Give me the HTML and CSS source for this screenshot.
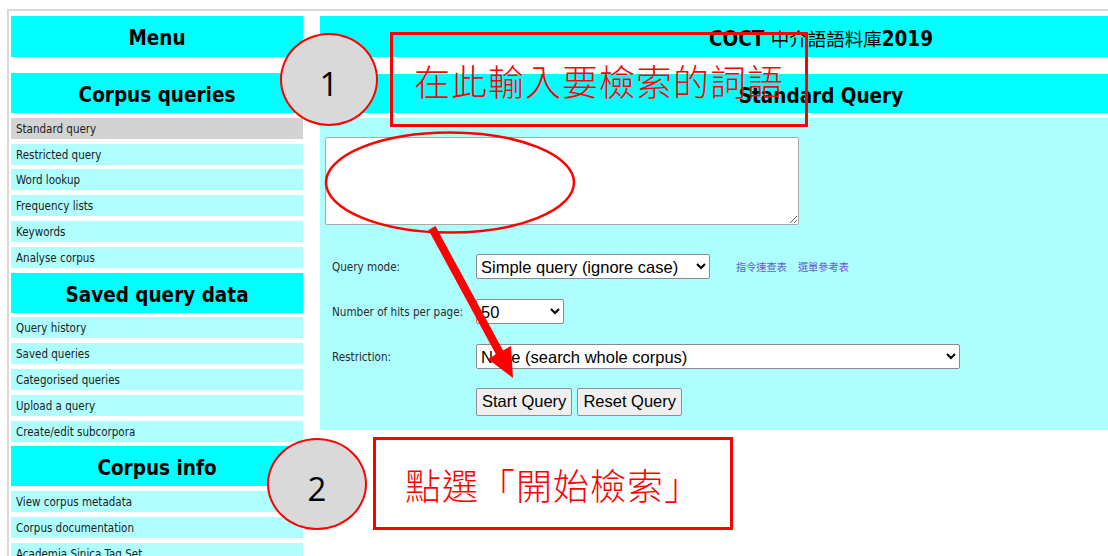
FILE: index.html
```html
<!DOCTYPE html>
<html lang="zh-Hant">
<head>
    <meta charset="UTF-8" />
    <title>COCT 中介語語料庫2019 - Standard Query</title>
    <link rel="stylesheet" href="styles.css">
</head>
<body>

    <div class="frame">
        <div class="layout">

            <!-- Left menu -->
            <nav class="menu">
                <div class="menu-head top">Menu</div>

                <div class="menu-head">Corpus queries</div>
                <a class="menu-item current">Standard query</a>
                <a class="menu-item">Restricted query</a>
                <a class="menu-item">Word lookup</a>
                <a class="menu-item">Frequency lists</a>
                <a class="menu-item">Keywords</a>
                <a class="menu-item">Analyse corpus</a>

                <div class="menu-head">Saved query data</div>
                <a class="menu-item">Query history</a>
                <a class="menu-item">Saved queries</a>
                <a class="menu-item">Categorised queries</a>
                <a class="menu-item">Upload a query</a>
                <a class="menu-item">Create/edit subcorpora</a>

                <div class="menu-head">Corpus info</div>
                <a class="menu-item">View corpus metadata</a>
                <a class="menu-item">Corpus documentation</a>
                <a class="menu-item">Academia Sinica Tag Set</a>
            </nav>

            <!-- Main query form -->
            <main class="content">
                <div class="page-head top">COCT <span class="cjk">中介語語料庫</span>2019</div>
                <div class="page-head">Standard Query</div>

                <div class="panel">
                    <textarea class="query-box"></textarea>

                    <div class="query-form">
                        <label class="field-label">Query mode:</label>
                        <div class="field">
                            <select class="sel-mode">
                                <option>Simple query (ignore case)</option>
                            </select>
                            <a class="help-link first">指令速查表</a>
                            <a class="help-link">選單參考表</a>
                        </div>

                        <label class="field-label">Number of hits per page:</label>
                        <div class="field">
                            <select class="sel-hits">
                                <option>50</option>
                            </select>
                        </div>

                        <label class="field-label">Restriction:</label>
                        <div class="field">
                            <select class="sel-restrict">
                                <option>None (search whole corpus)</option>
                            </select>
                        </div>

                        <div class="field buttons">
                            <button>Start Query</button>
                            <button>Reset Query</button>
                        </div>
                    </div>
                </div>
            </main>

        </div>
    </div>

    <!-- Tutorial annotations drawn over the page -->
    <div class="notes">
        <svg class="marks" width="1108" height="556" viewBox="0 0 1108 556">
            <ellipse cx="450" cy="182.5" rx="124" ry="50" fill="none" stroke="#ff0000" stroke-width="2.5" />
            <line x1="432" y1="228" x2="502" y2="357" stroke="#ff0000" stroke-width="8" />
            <polygon points="513,378 488,359 511,346" fill="#ff0000" />
        </svg>

        <div class="step step-one">1</div>
        <div class="callout callout-one">在此輸入要檢索的詞語</div>

        <div class="step step-two">2</div>
        <div class="callout callout-two">點選「開始檢索」</div>
    </div>

</body>
</html>
```

FILE: styles.css
```css
body {
    margin: 0;
    font-family: "DejaVu Sans Condensed", "DejaVu Sans", sans-serif;
    background: #ffffff;
    overflow: hidden;
    width: 1108px;
    height: 556px;
    position: relative;
}

.frame {
    margin: 9px 0 0 7px;
    padding: 5px 0 0 2px;
    border-top: 2px solid #d9d9d9;
    border-left: 2px solid #d9d9d9;
}

.layout {
    display: flex;
    gap: 17px;
    align-items: flex-start;
}

/* left menu */

.menu {
    width: 292px;
    flex: none;
    display: flex;
    flex-direction: column;
    gap: 4.8px;
}

.menu-head {
    height: 40px;
    line-height: 45px;
    background: #00ffff;
    text-align: center;
    font-weight: bold;
    font-size: 20.5px;
    color: #000;
}

.menu-head.top {
    height: 41px;
    margin-bottom: 11.2px;
}

.menu-item {
    display: block;
    height: 21px;
    line-height: 23px;
    padding-left: 5px;
    background: #afffff;
    font-size: 11.5px;
    color: #1a1a1a;
}

.menu-item.current {
    background: #d3d3d3;
}

/* main area */

.content {
    width: 1002px;
    flex: none;
}

.page-head {
    height: 39px;
    line-height: 45px;
    background: #00ffff;
    text-align: center;
    font-weight: bold;
    font-size: 20.5px;
    margin-bottom: 5px;
}

.page-head.top {
    height: 41px;
    line-height: 44px;
    margin-bottom: 17px;
}

.page-head .cjk {
    font-family: "Noto Sans CJK TC", sans-serif;
    font-weight: normal;
    font-size: 18.5px;
}

.panel {
    background: #adffff;
    height: 312px;
    padding: 19px 0 0 5px;
    box-sizing: border-box;
}

.query-box {
    display: block;
    width: 474px;
    height: 88px;
    box-sizing: border-box;
    margin: 0;
    border: 1px solid #a9a9a9;
    border-radius: 2px;
    background: #fff;
}

.query-form {
    margin-top: 19px;
    padding-left: 7px;
    display: grid;
    grid-template-columns: 144px auto;
    grid-auto-rows: 45px;
    align-items: center;
}

.field-label {
    font-size: 11.6px;
    color: #2b2b2b;
    padding-top: 1px;
}

.field {
    display: flex;
    align-items: center;
}

.field.buttons {
    grid-column: 2;
    gap: 5px;
}

select {
    height: 25px;
    box-sizing: border-box;
    font-family: "Liberation Sans", Arial, sans-serif;
    font-size: 16.5px;
    color: #000;
    background: #fff;
    border: 1px solid #8a8a8a;
    border-radius: 2px;
    padding: 0;
}

.sel-mode { width: 234px; }
.sel-hits { width: 88px; }
.sel-restrict { width: 484px; }

.help-link {
    font-family: "Noto Sans CJK TC", sans-serif;
    font-size: 10.2px;
    color: #6a55cc;
    margin-left: 11px;
}

.help-link.first {
    margin-left: 26px;
}

button {
    height: 28px;
    padding: 0 5px;
    font-family: "Liberation Sans", Arial, sans-serif;
    font-size: 16.5px;
    color: #000;
    background: #efefef;
    border: 1px solid #8f8f8f;
    border-radius: 2px;
}

/* annotations */

.notes {
    position: absolute;
    left: 0;
    top: 0;
    width: 1108px;
    height: 556px;
    pointer-events: none;
}

.marks {
    position: absolute;
    left: 0;
    top: 0;
}

.step {
    position: absolute;
    box-sizing: border-box;
    border: 2.5px solid #ff0000;
    border-radius: 50%;
    background: #d9d9d9;
    display: flex;
    align-items: center;
    justify-content: center;
    font-family: "Open Sans", "Liberation Sans", sans-serif;
    font-size: 33px;
    color: #000;
}

.step-one {
    left: 280px;
    top: 33px;
    width: 98px;
    height: 93px;
    padding-top: 8px;
}

.step-two {
    left: 267px;
    top: 438px;
    width: 100px;
    height: 92px;
    padding-top: 8px;
}

.callout {
    position: absolute;
    box-sizing: border-box;
    border: 3px solid #ff0000;
    display: flex;
    align-items: center;
    justify-content: center;
    font-family: "Noto Sans CJK TC", sans-serif;
    font-weight: 300;
    font-size: 36px;
    letter-spacing: 1px;
    color: #ff0000;
}

.callout-one {
    left: 390px;
    top: 32px;
    width: 418px;
    height: 95px;
}

.callout-two {
    left: 373px;
    top: 437px;
    width: 360px;
    height: 93px;
    background: #fff;
}
```
